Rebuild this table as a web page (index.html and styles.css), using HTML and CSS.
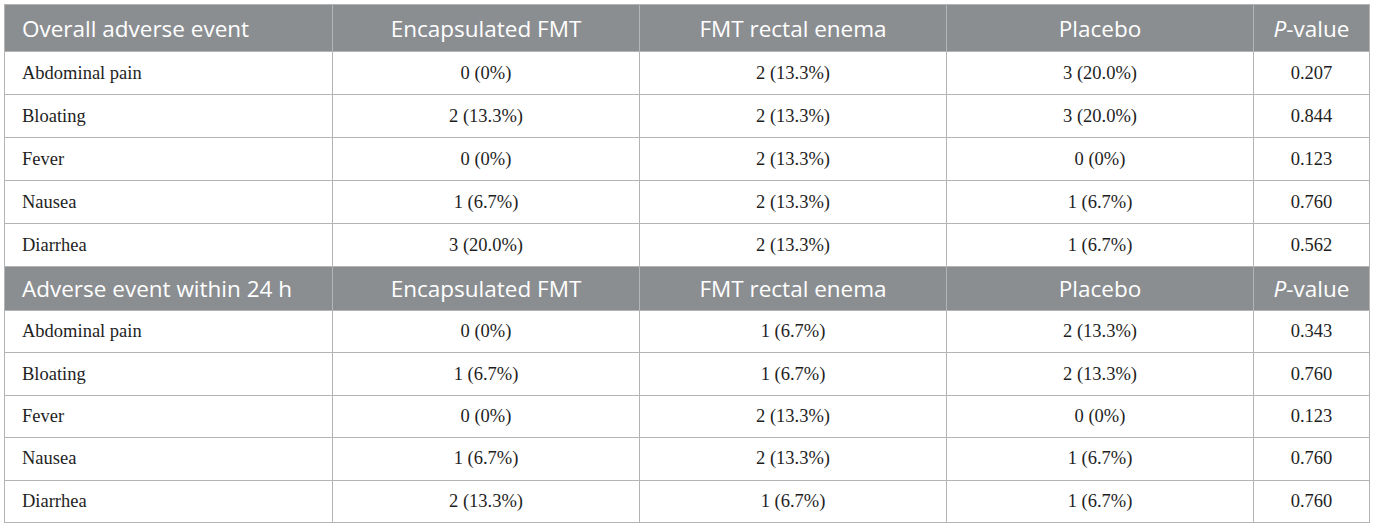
FILE: index.html
```html
<!DOCTYPE html>
<html>
<head>
<meta charset="utf-8">
<link rel="stylesheet" href="styles.css">
</head>
<body>
<table class="ae-table">
  <colgroup>
    <col class="c-label">
    <col class="c-grp">
    <col class="c-grp">
    <col class="c-grp">
    <col class="c-p">
  </colgroup>
  <tbody class="sec sec-1">
    <tr class="head">
      <th class="label">Overall adverse event</th>
      <th>Encapsulated FMT</th>
      <th>FMT rectal enema</th>
      <th>Placebo</th>
      <th><i>P</i>-value</th>
    </tr>
    <tr><td class="label">Abdominal pain</td><td>0 (0%)</td><td>2 (13.3%)</td><td>3 (20.0%)</td><td>0.207</td></tr>
    <tr><td class="label">Bloating</td><td>2 (13.3%)</td><td>2 (13.3%)</td><td>3 (20.0%)</td><td>0.844</td></tr>
    <tr><td class="label">Fever</td><td>0 (0%)</td><td>2 (13.3%)</td><td>0 (0%)</td><td>0.123</td></tr>
    <tr><td class="label">Nausea</td><td>1 (6.7%)</td><td>2 (13.3%)</td><td>1 (6.7%)</td><td>0.760</td></tr>
    <tr><td class="label">Diarrhea</td><td>3 (20.0%)</td><td>2 (13.3%)</td><td>1 (6.7%)</td><td>0.562</td></tr>
  </tbody>
  <tbody class="sec sec-2">
    <tr class="head">
      <th class="label">Adverse event within 24 h</th>
      <th>Encapsulated FMT</th>
      <th>FMT rectal enema</th>
      <th>Placebo</th>
      <th><i>P</i>-value</th>
    </tr>
    <tr><td class="label">Abdominal pain</td><td>0 (0%)</td><td>1 (6.7%)</td><td>2 (13.3%)</td><td>0.343</td></tr>
    <tr><td class="label">Bloating</td><td>1 (6.7%)</td><td>1 (6.7%)</td><td>2 (13.3%)</td><td>0.760</td></tr>
    <tr><td class="label">Fever</td><td>0 (0%)</td><td>2 (13.3%)</td><td>0 (0%)</td><td>0.123</td></tr>
    <tr><td class="label">Nausea</td><td>1 (6.7%)</td><td>2 (13.3%)</td><td>1 (6.7%)</td><td>0.760</td></tr>
    <tr><td class="label">Diarrhea</td><td>2 (13.3%)</td><td>1 (6.7%)</td><td>1 (6.7%)</td><td>0.760</td></tr>
  </tbody>
</table>
</body>
</html>
```

FILE: styles.css
```css
html, body {
  margin: 0;
  padding: 0;
  background: #ffffff;
}
body {
  padding: 4px 0 0 4px;
}
.ae-table {
  border-collapse: collapse;
  table-layout: fixed;
  width: 1365px;
  border: 1px solid #b4b4b4;
}
.c-label { width: 328px; }
.c-grp { width: 307px; }
.c-p { width: 116px; }

.ae-table th,
.ae-table td {
  border: 1px solid #b4b4b4;
  padding: 0 6px;
  text-align: center;
  vertical-align: middle;
  white-space: nowrap;
}
.ae-table th {
  background: #8b8e91;
  color: #ffffff;
  font-family: "Open Sans", "Lato", sans-serif;
  font-weight: 400;
  font-size: 22.5px;
}
.ae-table th i {
  font-style: italic;
}
.ae-table td {
  font-family: "Liberation Serif", "Times New Roman", serif;
  font-size: 18.5px;
  color: #1e1e1e;
}
.ae-table .label {
  text-align: left;
  padding-left: 17px;
}
.sec-1 .head { height: 47px; }
.sec-2 .head { height: 44px; }
.sec-1 tr:not(.head) { height: 43px; }
.sec-2 tr:not(.head) { height: 42.4px; }
```
